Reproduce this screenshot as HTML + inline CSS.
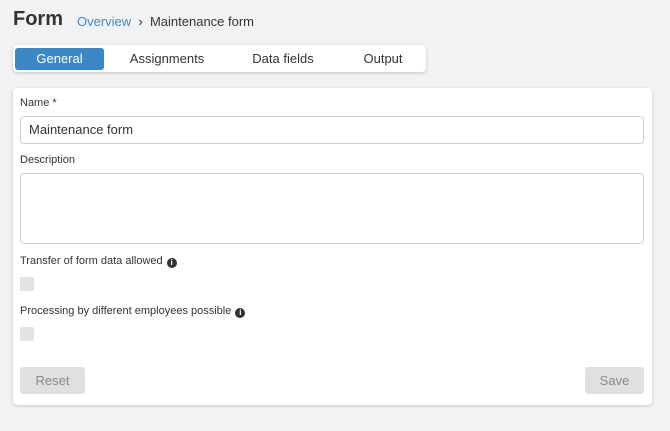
<!DOCTYPE html>
<html><head><style>
*{box-sizing:border-box;margin:0;padding:0}
body{width:670px;height:431px;background:#f1f2f4;font-family:"Liberation Sans",sans-serif;position:relative;overflow:hidden;color:#333}
.abs{position:absolute}
h1{position:absolute;left:13px;top:8px;font-size:20px;font-weight:bold;color:#333}
.bc{position:absolute;left:77px;top:14px;font-size:13px;color:#333}
.bc span{color:#4a86b5}
.tabs{left:13px;top:45px;width:413px;height:27px;background:#fff;border-radius:4px;box-shadow:0 1px 3px rgba(0,0,0,.2)}
.tab{position:absolute;top:3px;height:22px;line-height:22px;font-size:13px;text-align:center;color:#333}
.card{left:13px;top:88px;width:639px;height:317px;background:#fff;border-radius:4px;box-shadow:0 1px 3px rgba(0,0,0,.18)}
.lbl{position:absolute;left:7px;font-size:11px;color:#333}
.inp{position:absolute;left:7px;width:624px;border:1px solid #ccc;border-radius:4px;background:#fff}
.cb{position:absolute;left:7px;width:14px;height:14px;background:#e3e3e3;border-radius:2px}
.btn{position:absolute;top:279px;height:27px;background:#e0e0e0;border-radius:3px;color:#888;font-size:13px;text-align:center;line-height:27px}
.i{display:inline-block;width:10px;height:10px;border-radius:50%;background:#333;color:#fff;font-size:8px;line-height:10px;text-align:center;font-weight:bold;vertical-align:-1px;margin-left:4px}
</style></head><body>
<h1>Form</h1>
<div class="bc"><span>Overview</span> &nbsp;›&nbsp; Maintenance form</div>
<div class="abs tabs">
<div class="tab" style="left:2px;width:89px;background:#3d87c4;color:#fff;border-radius:3px">General</div>
<div class="tab" style="left:105px;width:98px">Assignments</div>
<div class="tab" style="left:225px;width:90px">Data fields</div>
<div class="tab" style="left:335px;width:70px">Output</div>
</div>
<div class="abs card">
<div class="lbl" style="top:9px">Name *</div>
<div class="inp" style="top:28px;height:28px;font-size:13px;line-height:26px;padding-left:8px">Maintenance form</div>
<div class="lbl" style="top:66px">Description</div>
<div class="inp" style="top:85px;height:71px"></div>
<div class="lbl" style="top:167px">Transfer of form data allowed<span class="i">i</span></div>
<div class="cb" style="top:189px"></div>
<div class="lbl" style="top:217px">Processing by different employees possible<span class="i">i</span></div>
<div class="cb" style="top:239px"></div>
<div class="btn" style="left:7px;width:65px">Reset</div>
<div class="btn" style="left:572px;width:59px">Save</div>
</div>
</body></html>
